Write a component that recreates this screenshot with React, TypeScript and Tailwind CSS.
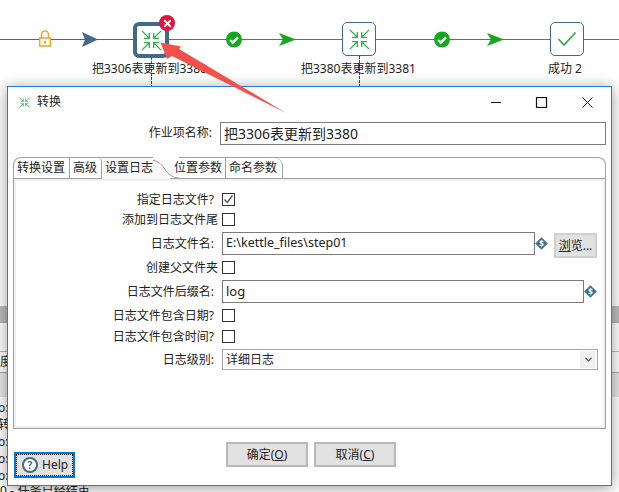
import React from "react";
import { X, ChevronDown } from "lucide-react";

const tabs = ["转换设置", "高级", "设置日志", "位置参数", "命名参数"];

// 转换 icon: four arrows pointing at the middle
function TransIcon({ size = 24, width = 1.6 }: { size?: number; width?: number }) {
  return (
    <svg width={size} height={size} viewBox="0 0 24 24" fill="none" stroke="#2bb24c" strokeWidth={width}>
      <path d="M1 1 L9.5 9.5 M9.5 3.5 V9.5 H3.5" />
      <path d="M23 1 L14.5 9.5 M14.5 3.5 V9.5 H20.5" />
      <path d="M1 23 L9.5 14.5 M9.5 20.5 V14.5 H3.5" />
      <path d="M23 23 L14.5 14.5 M14.5 20.5 V14.5 H20.5" />
    </svg>
  );
}

function CheckHop({ x }: { x: number }) {
  return (
    <g transform={`translate(${x} 39.5)`}>
      <circle r="8" fill="#14a81e" />
      <path d="M-4 0.5 L-1.2 3.2 L4 -2.2" stroke="#fff" strokeWidth="2.4" fill="none" />
    </g>
  );
}

function VarIcon() {
  return (
    <span className="relative flex h-[13px] w-[13px] shrink-0 items-center justify-center">
      <span className="absolute h-[9px] w-[9px] rotate-45 bg-[#44708f]" />
      <span className="relative text-[8px] leading-none font-bold text-white">$</span>
    </span>
  );
}

function Check({ checked = false }: { checked?: boolean }) {
  return (
    <span className="flex h-[13px] w-[13px] items-center justify-center border border-[#333] bg-white">
      {checked && (
        <svg width="11" height="11" viewBox="0 0 11 11" fill="none" stroke="#555" strokeWidth="1.3">
          <path d="M1.5 5.5 L4.2 8.5 L9.5 1.5" />
        </svg>
      )}
    </span>
  );
}

// one form row: right-aligned label, then the field
function Row({
  label,
  right = 198,
  h,
  mt,
  children,
}: {
  label: string;
  right?: number;
  h: string;
  mt: string;
  children: React.ReactNode;
}) {
  return (
    <div className={`flex items-center ${h} ${mt}`}>
      <div className="w-[206px] shrink-0 whitespace-nowrap text-right" style={{ paddingRight: 206 - right }}>
        {label}
      </div>
      {children}
    </div>
  );
}

export default function App() {
  return (
    <div className="relative h-[492px] w-[619px] overflow-hidden bg-white font-['Noto_Sans','Noto_Sans_CJK_SC',sans-serif] text-[12px] text-[#222]">
      {/* job canvas behind the dialog */}
      <div className="relative h-[305px] w-full">
        <svg className="absolute top-0 left-0" width="619" height="120">
          <line x1="0" y1="39.5" x2="134" y2="39.5" stroke="#44698a" />
          <line x1="168" y1="39.5" x2="619" y2="39.5" stroke="#14a81e" />
          <line x1="151.5" y1="57" x2="151.5" y2="86" stroke="#c8102e" strokeDasharray="3 1" />
          <line x1="359.5" y1="56" x2="359.5" y2="86" stroke="#c8102e" strokeDasharray="3 1" />
          <path d="M82 32 L98 39.5 L82 47 L85 39.5 Z" fill="#44698a" />
          <path d="M279 33 L296 39.5 L279 46 L283 39.5 Z" fill="#14a81e" />
          <path d="M487 33 L504 39.5 L487 46 L491 39.5 Z" fill="#14a81e" />
          <CheckHop x={234} />
          <CheckHop x={442} />
          <g fill="#fff" stroke="#f5a623" strokeWidth="1.5">
            <rect x="39.7" y="38" width="10.6" height="8" />
            <path d="M41.5 38 V34.5 a3.5 3.5 0 0 1 7 0 V38" fill="none" />
          </g>
          <rect x="44" y="41" width="2" height="2.5" fill="#f5a623" />
        </svg>

        <div className="absolute top-[22px] left-[133px] flex h-[36px] w-[36px] items-center justify-center rounded-[6px] border-[4px] border-[#42698a] bg-white">
          <TransIcon size={21} width={1.5} />
        </div>
        <div className="absolute top-[22px] left-[342px] flex h-[34px] w-[34px] items-center justify-center rounded-[5px] border border-[#42698a] bg-white">
          <TransIcon size={21} width={1.5} />
        </div>
        <div className="absolute top-[22px] left-[550px] flex h-[34px] w-[34px] items-center justify-center rounded-[5px] border border-[#42698a] bg-white">
          <svg width="20" height="16" viewBox="0 0 20 16" fill="none" stroke="#2bb24c" strokeWidth="1.8">
            <path d="M1.5 8 L7 14 L18.5 1.5" />
          </svg>
        </div>
        <div className="absolute top-[15px] left-[159px] flex h-[16px] w-[16px] items-center justify-center rounded-full bg-[#e0143c]">
          <X size={11} strokeWidth={4} color="#fff" />
        </div>

        <div className="absolute top-[60px] left-[92px] whitespace-nowrap">把3306表更新到3380</div>
        <div className="absolute top-[60px] left-[301px] whitespace-nowrap">把3380表更新到3381</div>
        <div className="absolute top-[60px] left-[548px] whitespace-nowrap">成功 2</div>
      </div>

      {/* bottom panels, only the edges show beside the dialog */}
      <div className="flex flex-col">
        <div className="h-[1px]" />
        <div className="h-[17px] border-b border-[#aaa] bg-[#bdbdbd]" />
        <div className="h-[29px] border-b border-[#bbb]" />
        <div className="h-[21px] border-b border-[#aaa] leading-[20px]">度</div>
        <div className="h-[24px] bg-[#e6e6e6]" />
        <div className="-ml-[2px] flex h-[88px] flex-col pt-[2px] leading-[17px]">
          <span>o:</span>
          <span>转</span>
          <span>o:</span>
          <span>o:</span>
          <span>o:</span>
        </div>
        <div className="flex gap-[4px] leading-[12px] whitespace-nowrap">
          <span>0 -</span>
          <span>任务已经结束</span>
        </div>
      </div>

      {/* 转换 dialog */}
      <div className="absolute top-[86px] left-[7px] flex h-[400px] w-[605px] flex-col border border-[#1883d7] bg-white shadow-[0_2px_14px_rgba(0,0,0,0.4)]">
        <div className="flex h-[30px] shrink-0 items-center pl-[11px]">
          <TransIcon size={11} width={1.6} />
          <span className="ml-[7px]">转换</span>
          <svg className="mr-[18px] ml-auto" width="102" height="11" fill="none" stroke="#111">
            <path d="M0 5.5 H10" />
            <rect x="45.5" y="0.5" width="10" height="10" strokeWidth="1.2" />
            <path d="M91.5 0.5 L101.5 10.5 M101.5 0.5 L91.5 10.5" />
          </svg>
        </div>

        <div className="mt-[5px] flex h-[22px] shrink-0 items-center">
          <div className="w-[204px] shrink-0 text-right">作业项名称:</div>
          <div className="ml-[8px] flex h-[23px] w-[386px] items-center border border-[#7a7a7a] pl-[3px] text-[14px]">
            把3306表更新到3380
          </div>
        </div>

        {/* tab folder */}
        <div className="mt-[13px] ml-[5px] flex h-[272px] w-[593px] shrink-0 flex-col rounded-t-[8px] border-t border-r border-l border-[#a0a0a0]">
          <div className="relative flex h-[21px] shrink-0 border-b border-[#a0a0a0]">
            {tabs.map((t, i) => (
              <div
                key={t}
                className={
                  i === 0
                    ? "w-[56px] rounded-tl-[6px] border-r border-[#a0a0a0] pl-[3px] leading-[20px]"
                    : i === 1
                      ? "w-[32px] rounded-tr-[4px] border-r border-[#a0a0a0] pl-[3px] leading-[20px]"
                      : i === 2
                        ? "relative -mb-[1px] w-[68px] bg-[#f8f8f8] pl-[3px] leading-[20px]"
                        : i === 3
                          ? "relative z-10 w-[56px] border-r border-[#a0a0a0] pl-[4px] leading-[20px]"
                          : "w-[57px] rounded-tr-[8px] border-r border-[#a0a0a0] pl-[3px] leading-[20px]"
                }
              >
                {t}
              </div>
            ))}
            <svg className="absolute top-[-1px] left-[139px]" width="26" height="22" fill="none">
              <path d="M0 3 C12 5 12 21 26 21 H26 V0 H0 Z" fill="#fff" />
              <path d="M0 3 C12 5 12 21 26 21" stroke="#a0a0a0" />
            </svg>
          </div>
          <div className="flex-1 border-b border-[#a0a0a0] bg-[#f0f0f0] p-[2px]">
            <div className="flex h-full flex-col bg-white pt-[12px]">
              <Row label="指定日志文件?" h="h-[13px]" mt="mt-0">
                <Check checked />
              </Row>
              <Row label="添加到日志文件尾" right={202} h="h-[13px]" mt="mt-[7px]">
                <Check />
              </Row>
              <Row label="日志文件名:" h="h-[23px]" mt="mt-[6px]">
                <div className="flex h-[23px] w-[313px] items-center border border-[#7a7a7a] pl-[3px] text-[12.5px]">
                  E:\kettle_files\step01
                </div>
                <VarIcon />
                <button className="mt-[4px] ml-[6px] flex h-[25px] w-[43px] items-center justify-center border-2 border-[#d0d0d0] bg-[#e1e1e1]">
                  <span className="underline">浏</span>览...
                </button>
              </Row>
              <Row label="创建父文件夹" right={202} h="h-[13px]" mt="mt-[6px]">
                <Check />
              </Row>
              <Row label="日志文件后缀名:" h="h-[23px]" mt="mt-[6px]">
                <div className="flex h-[23px] w-[362px] items-center border border-[#7a7a7a] pl-[3px] text-[13px]">
                  log
                </div>
                <VarIcon />
              </Row>
              <Row label="日志文件包含日期?" h="h-[13px]" mt="mt-[6px]">
                <Check />
              </Row>
              <Row label="日志文件包含时间?" h="h-[13px]" mt="mt-[8px]">
                <Check />
              </Row>
              <Row label="日志级别:" h="h-[21px]" mt="mt-[6px]">
                <div className="flex h-[21px] w-[376px] items-center justify-between border border-[#a8a8a8] pl-[3px]">
                  详细日志
                  <span className="mr-[1px] flex h-[17px] w-[16px] items-center justify-center bg-[#f0f0f0]">
                    <ChevronDown size={11} strokeWidth={3} color="#555" />
                  </span>
                </div>
              </Row>
            </div>
          </div>
        </div>

        {/* bottom buttons */}
        <div className="relative flex-1">
          <div className="mt-[13px] ml-[218px] flex gap-[6px]">
            <button className="h-[25px] w-[82px] border-2 border-[#b8b8b8] bg-[#e1e1e1]">
              确定(<span className="underline">O</span>)
            </button>
            <button className="h-[25px] w-[82px] border-2 border-[#b8b8b8] bg-[#e1e1e1]">
              取消(<span className="underline">C</span>)
            </button>
          </div>
          <button className="absolute top-[23px] left-[6px] flex h-[26px] w-[61px] items-center gap-[4px] border-2 border-[#0078d7] bg-[#e1e1e1] pl-[6px] outline-1 -outline-offset-3 outline-black outline-dotted">
            <span className="flex h-[16px] w-[16px] items-center justify-center rounded-full border-2 border-[#44698a] bg-white text-[10px] leading-none font-bold text-[#44698a]">
              ?
            </span>
            Help
          </button>
        </div>
      </div>

      {/* annotation arrow laid over the screenshot */}
      <svg className="absolute top-0 left-0" width="619" height="120">
        <path d="M160.5 42.5 L181 46.5 L179 49 L286 113 L172 56 L167 59 Z" fill="#f2504b" />
      </svg>
    </div>
  );
}
